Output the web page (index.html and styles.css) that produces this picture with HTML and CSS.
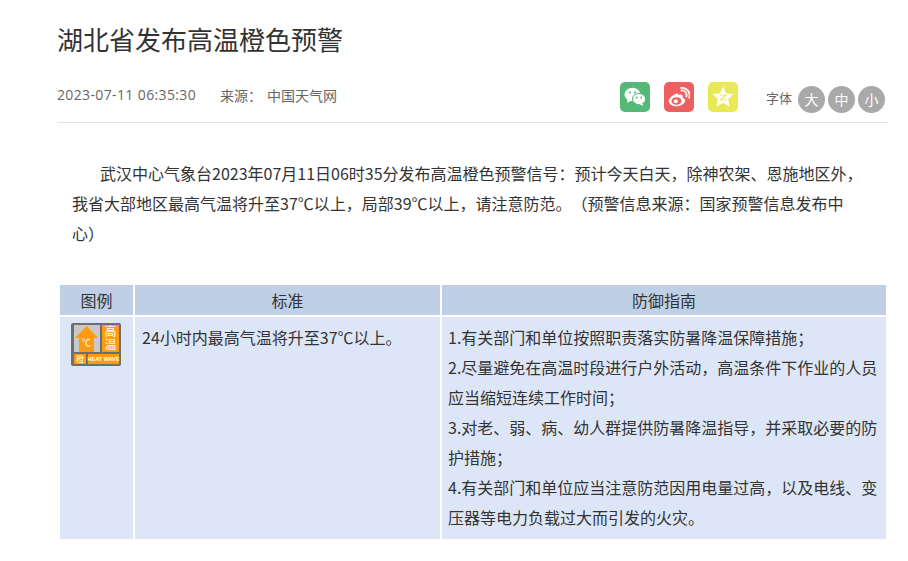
FILE: index.html
```html
<!DOCTYPE html>
<html lang="zh-CN">
<head>
<meta charset="utf-8">
<title>湖北省发布高温橙色预警</title>
<link rel="stylesheet" href="styles.css">
</head>
<body>
<main class="article">
  <h1 class="title">湖北省发布高温橙色预警</h1>
  <div class="meta">
    <div class="info">
      <span class="date">2023-07-11 06:35:30</span>
      <span class="source">来源：</span>
      <span class="origin">中国天气网</span>
    </div>
    <div class="tools">
      <a class="share wechat"><svg width="22" height="20" viewBox="0 0 22 20"><ellipse cx="8.5" cy="7.5" rx="8" ry="6.8" fill="#fff"/><path d="M3.5 11.5 L3 16 L8 13 Z" fill="#fff"/><ellipse cx="15" cy="12" rx="6.6" ry="5.6" fill="#fff" stroke="#55b878" stroke-width="1"/><path d="M18 16 L19.5 19 L15 17 Z" fill="#fff"/><circle cx="6" cy="5.5" r="1.1" fill="#55b878"/><circle cx="11" cy="5.5" r="1.1" fill="#55b878"/><circle cx="12.8" cy="10.5" r=".9" fill="#55b878"/><circle cx="17.2" cy="10.5" r=".9" fill="#55b878"/></svg></a>
      <a class="share weibo"><svg width="22" height="20" viewBox="0 0 22 20"><path d="M9 6.5C5 7.500 .5 11.500 .8 14.500C1.200 18 5.500 19.500 9.500 19.200C14 18.800 17.500 16 17 13C16.700 11.500 15.300 11 14.500 10.500C15.300 8.500 14.500 7.500 12.500 7.500C11.500 7.500 10 8.200 10 8.200C10.500 6.500 10 6.200 9 6.500Z" fill="#fff"/><ellipse cx="8.500" cy="14" rx="5" ry="3.800" fill="#ee5f5f"/><circle cx="7.800" cy="14.200" r="2" fill="#fff"/><path d="M13.500 3.500C16.500 3 19.500 6 18.500 9.500" fill="none" stroke="#fff" stroke-width="1.800" stroke-linecap="round"/><path d="M13 .9C18 .2 23 5 21.200 10.800" fill="none" stroke="#fff" stroke-width="1.800" stroke-linecap="round"/></svg></a>
      <a class="share qzone"><svg width="22" height="21" viewBox="0 0 22 21"><path d="M11 .5L14.200 7.200L21.500 8.200L16.200 13.200L17.500 20.500L11 17L4.500 20.500L5.800 13.200L.5 8.200L7.800 7.200Z" fill="#fff"/><path d="M7.500 9H14L8.500 14H14.500" fill="none" stroke="#e9e956" stroke-width="1.200"/></svg></a>
      <div class="font-size">
        <span class="font-label">字体</span>
        <button class="size-btn">大</button>
        <button class="size-btn">中</button>
        <button class="size-btn">小</button>
      </div>
    </div>
  </div>
  <p class="lead">武汉中心气象台2023年07月11日06时35分发布高温橙色预警信号：预计今天白天，除神农架、恩施地区外，我省大部地区最高气温将升至37℃以上，局部39℃以上，请注意防范。（预警信息来源：国家预警信息发布中心）</p>
  <table class="guide">
    <colgroup><col class="col-icon"><col class="col-std"><col></colgroup>
    <thead>
      <tr><th>图例</th><th>标准</th><th>防御指南</th></tr>
    </thead>
    <tbody>
      <tr>
        <td class="icon-cell">
          <svg class="alert-icon" width="50" height="43" viewBox="0 0 50 43">
            <rect width="50" height="43" rx="2" fill="#6e6e6e"/>
            <rect x="3" y="2" width="26" height="27" fill="#c9c9c9"/>
            <path d="M15.500 3L27 15H23V29H8V15H4Z" fill="#ff9b0f"/>
            <text x="15.500" y="23" class="ic-c">℃</text>
            <rect x="31" y="2" width="17" height="27" fill="#ff9b0f"/>
            <text x="39.500" y="15.500" class="ic-cn">高温</text>
            <rect x="3" y="31" width="12" height="10" fill="#ff9b0f"/>
            <text x="9" y="39" class="ic-o">橙</text>
            <rect x="17" y="31" width="31" height="10" fill="#ff9b0f"/>
            <text x="32.500" y="38" class="ic-en">HEAT WAVE</text>
          </svg>
        </td>
        <td>24小时内最高气温将升至37℃以上。</td>
        <td class="steps">1.有关部门和单位按照职责落实防暑降温保障措施；<br>2.尽量避免在高温时段进行户外活动，高温条件下作业的人员应当缩短连续工作时间；<br>3.对老、弱、病、幼人群提供防暑降温指导，并采取必要的防护措施；<br>4.有关部门和单位应当注意防范因用电量过高，以及电线、变压器等电力负载过大而引发的火灾。</td>
      </tr>
    </tbody>
  </table>
</main>
</body>
</html>
```
FILE: styles.css
```css
* { box-sizing: border-box; }
html, body { margin: 0; padding: 0; background: #fff; }
body {
  font-family: "Noto Sans CJK SC", "Open Sans", sans-serif;
  color: #333;
  text-spacing-trim: space-all;
}
.article { width: 831px; margin-left: 57px; }
.title {
  margin: 0;
  padding-top: 19px;
  font-size: 26px;
  font-weight: 400;
  line-height: 40px;
  color: #333;
}
.meta {
  display: flex;
  justify-content: space-between;
  align-items: center;
  height: 64px;
  padding-top: 12px;
  border-bottom: 1px solid #e2e2e2;
}
.info { display: flex; font-size: 14px; line-height: 20px; color: #666; margin-top: -4px; }
.date { width: 163px; letter-spacing: .37px; font-family: "Open Sans", sans-serif; }
.source { width: 47px; }
.tools { display: flex; align-items: center; }
.share {
  display: flex;
  align-items: center;
  justify-content: center;
  width: 30px;
  height: 30px;
  margin-right: 14px;
  border-radius: 5px;
}
.wechat { background: #55b878; }
.weibo { background: #ee5f5f; }
.qzone { background: #e9e956; margin-right: 0; }
.font-size { display: flex; align-items: center; margin: 5px 3px 0 28px; }
.font-label { font-size: 13px; color: #666; margin: 0 6px 3px 0; }
.size-btn {
  width: 27px;
  height: 27px;
  margin-right: 3px;
  padding: 0;
  border: 0;
  border-radius: 50%;
  background: #a9a9a9;
  color: #fff;
  font-family: inherit;
  font-size: 14px;
  line-height: 27px;
}
.size-btn:last-child { margin-right: 0; }
.lead {
  margin: 35px 0 0;
  padding: 0 15px;
  font-size: 16px;
  line-height: 30px;
  text-indent: 28px;
  color: #333;
}
.guide {
  width: 830px;
  margin: 35px 0 0 1px;
  border-collapse: separate;
  border-spacing: 2px;
  table-layout: fixed;
  font-size: 16px;
  color: #333;
}
.col-icon { width: 73px; }
.col-std { width: 305px; }
.guide th {
  height: 30px;
  padding: 0;
  background: #bfcfe6;
  font-weight: 400;
  line-height: 29px;
  text-align: center;
}
.guide td {
  padding: 5px 7px 7px;
  background: #dde6f7;
  line-height: 30px;
  vertical-align: top;
}
.guide td.steps { padding-left: 6px; }
.guide td.icon-cell { padding: 6px 0 0 11px; line-height: 0; }
.alert-icon { display: block; }
.alert-icon text { fill: #fff; text-anchor: middle; font-family: "Noto Sans CJK SC", sans-serif; }
.ic-c { font-size: 9px; }
.alert-icon .ic-cn { font-size: 12px; writing-mode: vertical-rl; letter-spacing: 1px; }
.ic-o { font-size: 8px; }
.ic-en { font-size: 5.500px; font-weight: 700; }
.alert-icon .ic-en { font-family: "Liberation Sans", sans-serif; }
```
